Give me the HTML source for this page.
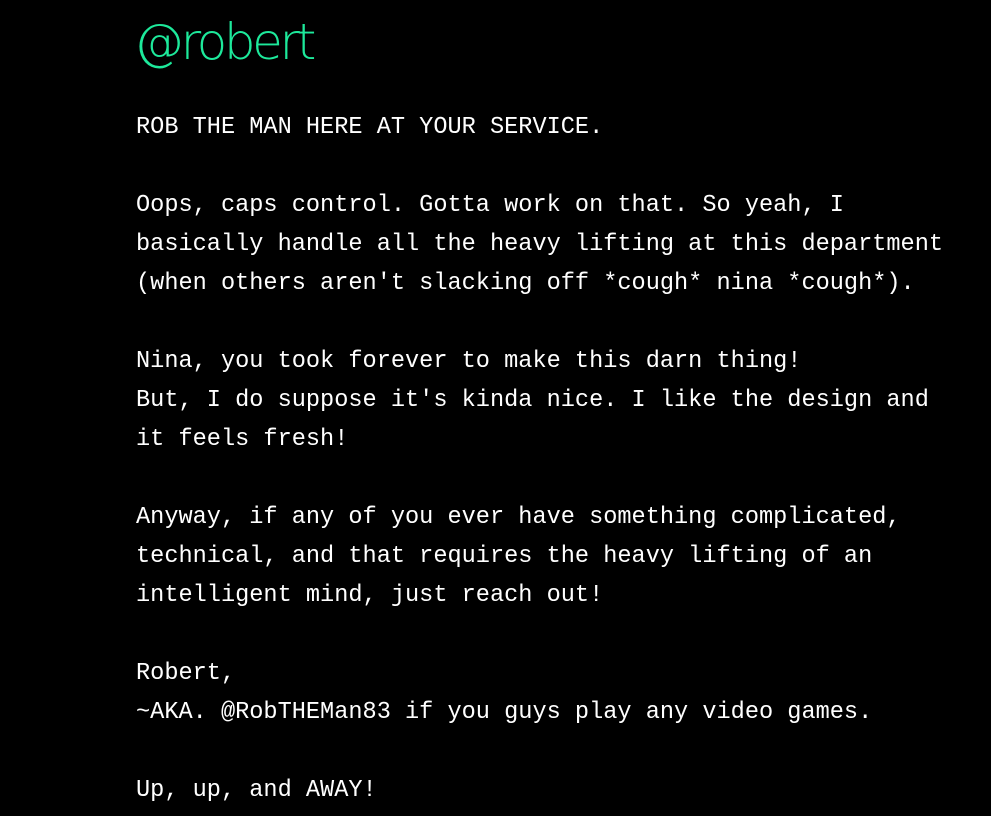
<!DOCTYPE html>
<html><head><meta charset="utf-8"><style>
html,body{margin:0;padding:0;background:#000;width:991px;height:816px;overflow:hidden}
h1{position:absolute;left:134px;top:6px;margin:0;font-family:"DejaVu Sans","Liberation Sans",sans-serif;font-weight:200;font-size:50px;letter-spacing:-3.4px;color:#1de99b;line-height:72px}
pre{position:absolute;left:136px;top:108px;margin:0;font-family:"Liberation Mono",monospace;font-size:23.6px;line-height:39px;color:#fff}
</style></head><body>
<h1>@robert</h1>
<pre>ROB THE MAN HERE AT YOUR SERVICE.

Oops, caps control. Gotta work on that. So yeah, I
basically handle all the heavy lifting at this department
(when others aren't slacking off *cough* nina *cough*).

Nina, you took forever to make this darn thing!
But, I do suppose it's kinda nice. I like the design and
it feels fresh!

Anyway, if any of you ever have something complicated,
technical, and that requires the heavy lifting of an
intelligent mind, just reach out!

Robert,
~AKA. @RobTHEMan83 if you guys play any video games.

Up, up, and AWAY!</pre>
</body></html>
